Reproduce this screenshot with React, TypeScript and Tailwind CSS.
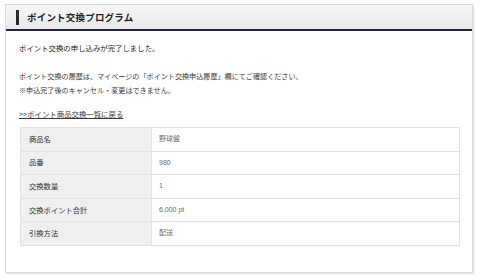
import React from 'react';

const rows = [
  { label: '商品名', value: '野球盤' },
  { label: '品番', value: '980' },
  { label: '交換数量', value: '1' },
  { label: '交換ポイント合計', value: '6,000 pt' },
  { label: '引換方法', value: '配送' },
];

export default function App() {
  return (
    <div
      className="w-[480px] h-[278px] bg-white pt-[4px] pl-[5px]"
      style={{ fontFamily: '"Noto Sans CJK JP", "Noto Sans", sans-serif' }}
    >
      <div className="w-[468px] h-[269px] border border-[#d9d9d9] shadow-[1px_1px_2px_rgba(0,0,0,0.12)] bg-white">
        <div className="h-[26px] bg-gradient-to-b from-[#f7f7f7] to-[#e9e9e9] border-b-2 border-[#23233f] flex items-center pl-[10px]">
          <div className="w-[3px] h-[15px] bg-[#2b2b2b] mr-[8px]" />
          <span className="text-[9.5px] font-bold text-[#222] tracking-[0.2px]">ポイント交換プログラム</span>
        </div>
        <div className="px-[13px] pt-[11px]">
          <p className="text-[7.4px] leading-[12px] text-[#222]">ポイント交換の申し込みが完了しました。</p>
          <div className="mt-[15px] text-[7.1px] leading-[14px] text-[#3a3a3a]">
            <p>ポイント交換の履歴は、マイページの「ポイント交換申込履歴」欄にてご確認ください。</p>
            <p>※申込完了後のキャンセル・変更はできません。</p>
          </div>
          <a className="block mt-[11px] text-[7.4px] leading-[12px] text-[#3a3a3a] underline" href="#">
            &gt;&gt;ポイント商品交換一覧に戻る
          </a>
          <table className="mt-[7px] w-[440px] border-collapse border border-[#e2e2e2] ml-[1px]">
            <tbody>
              {rows.map((r) => (
                <tr key={r.label} className="h-[23.6px] border-b border-[#e2e2e2]">
                  <td className="w-[131px] bg-[#efefef] pl-[8px] text-[7.3px] text-[#333] border-r border-[#e2e2e2]">
                    {r.label}
                  </td>
                  <td className="pl-[7px] text-[7px] text-[#6a6a6a] font-['Liberation_Sans','Noto_Sans_CJK_JP',sans-serif]">
                    {r.value}
                  </td>
                </tr>
              ))}
            </tbody>
          </table>
        </div>
      </div>
    </div>
  );
}
